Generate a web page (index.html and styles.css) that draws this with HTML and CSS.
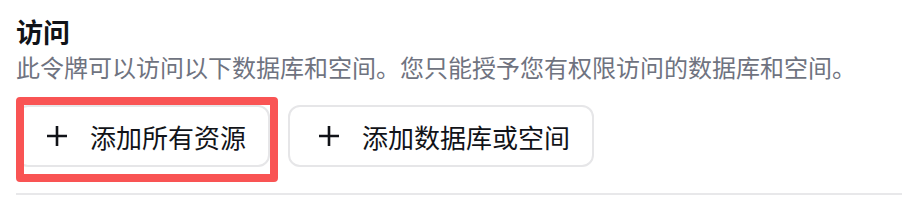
FILE: index.html
```html
<!DOCTYPE HTML>
<html lang="zh-CN">
<head>
    <meta charset="UTF-8">
    <meta name="viewport" content="width=device-width, initial-scale=1.0">
    <title>访问</title>
    <link rel="stylesheet" href="styles.css">
</head>
<body>
    <section class="access">
        <h2 class="access-title">访问</h2>
        <p class="access-desc">此令牌可以访问以下数据库和空间。您只能授予您有权限访问的数据库和空间。</p>
        <div class="access-actions">
            <button type="button" class="add-btn highlighted">
                <svg class="plus" viewBox="0 0 22 22" width="22" height="22"><path d="M11 1v20M1 11h20" stroke="currentColor" stroke-width="2.6" fill="none"/></svg>
                <span>添加所有资源</span>
            </button>
            <button type="button" class="add-btn">
                <svg class="plus" viewBox="0 0 22 22" width="22" height="22"><path d="M11 1v20M1 11h20" stroke="currentColor" stroke-width="2.6" fill="none"/></svg>
                <span>添加数据库或空间</span>
            </button>
        </div>
        <div class="divider"></div>
    </section>
</body>
</html>
```

FILE: styles.css
```css
body {
    margin: 0;
    background: #ffffff;
    font-family: "Noto Sans CJK SC", "Noto Sans", sans-serif;
    color: #111318;
}

.access {
    padding: 13px 0 0 16px;
}

.access-title {
    margin: 0;
    font-size: 27px;
    line-height: 37px;
    font-weight: 700;
    color: #111318;
}

.access-desc {
    margin: 0;
    font-size: 24px;
    line-height: 34px;
    color: #6f7380;
}

.access-actions {
    display: flex;
    gap: 18px;
    margin-top: 21px;
}

.add-btn {
    position: relative;
    display: flex;
    align-items: center;
    gap: 22px;
    height: 62px;
    padding: 0 22px 0 28px;
    background: #ffffff;
    border: 2px solid #e6e6e8;
    border-radius: 12px;
    font-family: inherit;
    font-size: 26px;
    font-weight: 400;
    color: #111318;
    cursor: pointer;
}

.plus {
    display: block;
    flex: none;
}

.highlighted::after {
    content: "";
    position: absolute;
    top: -10px;
    left: -2px;
    right: -10px;
    bottom: -17px;
    border: 8px solid #f95454;
    border-radius: 4px;
    pointer-events: none;
}

.divider {
    height: 2px;
    background: #e8e8ea;
    margin-top: 26px;
}
```
